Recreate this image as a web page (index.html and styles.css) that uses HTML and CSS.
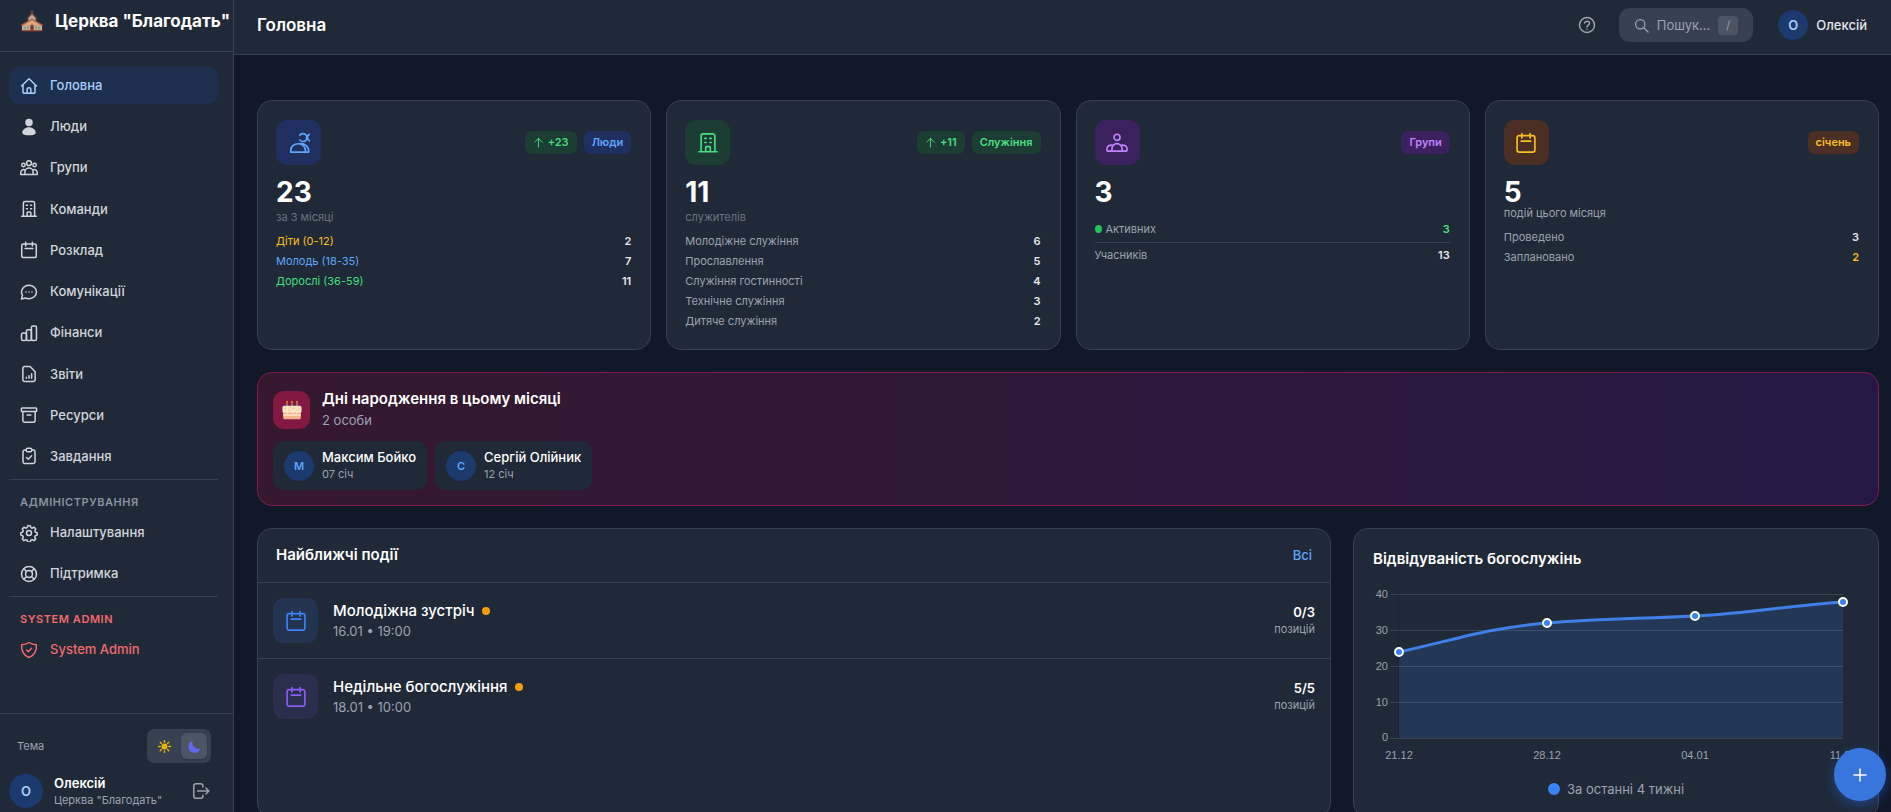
FILE: index.html
```html
<!DOCTYPE html>
<html lang="uk">
<head>
<meta charset="utf-8">
<meta name="viewport" content="width=device-width, initial-scale=1">
<title>Головна — Церква "Благодать"</title>
<link rel="stylesheet" href="styles.css">
</head>
<body>
<svg class="sprite" aria-hidden="true">
  <symbol id="i-home" viewBox="0 0 24 24"><path d="M2 12 12 2.3 22 12M4 10.500V20a1.700 1.700 0 0 0 1.700 1.700h12.600A1.700 1.700 0 0 0 20 20v-9.500M9.500 21.500v-4.700a2.500 2.500 0 0 1 5 0v4.700"/></symbol>
  <symbol id="i-person" viewBox="0 0 24 24"><g fill="currentColor" stroke="none"><circle cx="12" cy="6" r="5"/><path d="M12 12.200c5 0 9 3.600 9 7.300 0 2.300-4 3.500-9 3.500s-9-1.200-9-3.500c0-3.700 4-7.300 9-7.300z"/></g></symbol>
  <symbol id="i-groups" viewBox="0 0 24 24"><circle cx="12" cy="5.500" r="3.200"/><circle cx="4.600" cy="8" r="2.300"/><circle cx="19.400" cy="8" r="2.300"/><path d="M6.500 20.800v-3.300a5.500 5.500 0 0 1 11 0v3.300zM6.500 20.800H1v-2.600a4 4 0 0 1 5.700-3.700M17.500 20.800H23v-2.600a4 4 0 0 0-5.700-3.700"/></symbol>
  <symbol id="i-building" viewBox="0 0 24 24"><path d="M2.200 21.500h19.600M4.500 21.500V4.300A2.200 2.200 0 0 1 6.700 2.100h10.600a2.200 2.200 0 0 1 2.200 2.200v17.200M9.500 21.500V17a1 1 0 0 1 1-1h3a1 1 0 0 1 1 1v4.500M8.500 7h1.400M14.100 7h1.400M8.500 11.500h1.400M14.100 11.500h1.400"/></symbol>
  <symbol id="i-calendar" viewBox="0 0 24 24"><rect x="2.300" y="4" width="19.400" height="18" rx="2.400"/><path d="M7.500 1.600v5M16.500 1.600v5M6.800 10h10.400"/></symbol>
  <symbol id="i-chat" viewBox="0 0 24 24"><path d="M2 21.300 3.200 16.200C2.400 14.900 2 13.500 2 12c0-5 4.500-9 10-9s10 4 10 9-4.500 9-10 9c-1.800 0-3.500-.4-5-1.100zM7.900 12h.1M12 12h.1M16 12h.1"/></symbol>
  <symbol id="i-bars" viewBox="0 0 24 24"><rect x="2" y="12" width="6.600" height="10" rx="2"/><rect x="8.600" y="7.500" width="6.600" height="14.500" rx="2"/><rect x="15.200" y="2.500" width="6.800" height="19.500" rx="2"/></symbol>
  <symbol id="i-report" viewBox="0 0 24 24"><path d="M13.500 2H6.300A2.500 2.500 0 0 0 3.800 4.500v15A2.500 2.500 0 0 0 6.300 22h11.400a2.500 2.500 0 0 0 2.500-2.500V9zM8.500 17.800v-1.600M12 17.800v-3.600M15.500 17.800v-6"/></symbol>
  <symbol id="i-archive" viewBox="0 0 24 24"><rect x="1.800" y="2.800" width="20.400" height="4.400" rx="1"/><path d="M3.800 7.200v12A2.300 2.300 0 0 0 6.100 21.500h11.800a2.300 2.300 0 0 0 2.300-2.300v-12M9.500 12h5"/></symbol>
  <symbol id="i-task" viewBox="0 0 24 24"><path d="M8 4H6.300A2.300 2.300 0 0 0 4 6.300v13.400A2.300 2.300 0 0 0 6.300 22h11.400a2.300 2.300 0 0 0 2.300-2.300V6.300A2.300 2.300 0 0 0 17.700 4H16M8.700 14l2.400 2.400 4.400-4.600"/><rect x="8.200" y="1.800" width="7.600" height="4.600" rx="2.200"/></symbol>
  <symbol id="i-gear" viewBox="0 0 24 24"><circle cx="12" cy="12" r="3.300"/><path d="M10.300 2.200h3.400l.7 2.600 1.900.8 2.400-1.300 2.300 2.300-1.200 2.400.8 1.900 2.400.7v3.200l-2.500.7-.8 2 1.300 2.300-2.400 2.400-2.300-1.300-1.900.8-.7 2.400h-3.400l-.7-2.400-1.900-.8-2.400 1.300L3 19.800l1.300-2.300-.8-2-2.400-.7v-3.200l2.400-.8.8-1.900L3 6.600l2.300-2.300 2.400 1.300 1.900-.8z"/></symbol>
  <symbol id="i-support" viewBox="0 0 24 24"><circle cx="12" cy="12" r="10"/><circle cx="12" cy="12" r="4.600"/><path d="m5 5 3.700 3.700M19 5l-3.700 3.700M5 19l3.700-3.700M19 19l-3.700-3.700"/></symbol>
  <symbol id="i-shield" viewBox="0 0 24 24"><path d="M12 2c2.600 2 6 3 9.800 3 .6 8-2.300 14-9.800 17C4.500 19 1.600 13 2.200 5 6 5 9.400 4 12 2zM8.700 12l2.400 2.300 4.300-4.500"/></symbol>
  <symbol id="i-logout" viewBox="0 0 24 24"><path d="M14.500 6.500V5A2.600 2.600 0 0 0 11.900 2.400H5A2.600 2.600 0 0 0 2.400 5v14A2.600 2.600 0 0 0 5 21.600h6.900a2.600 2.600 0 0 0 2.600-2.600v-1.500M7.500 12H22.500M18.500 8l4 4-4 4"/></symbol>
  <symbol id="i-help" viewBox="0 0 24 24"><circle cx="12" cy="12" r="10"/><path d="M8.700 9.300c.6-1.600 1.800-2.300 3.300-2.300 1.900 0 3.400 1.100 3.400 2.800 0 2.300-3.300 2.500-3.300 4.700M12 17.600h.1"/></symbol>
  <symbol id="i-search" viewBox="0 0 24 24"><circle cx="10" cy="10" r="7.500"/><path d="m15.500 15.500 7 7"/></symbol>
  <symbol id="i-up" viewBox="0 0 24 24"><path d="M12 22V3M4 11l8-8 8 8"/></symbol>
  <symbol id="i-users-cut" viewBox="0 0 24 24" overflow="visible"><path d="M3 22v-1.500c0-4.500 3.500-7.700 8-7.700s8 3.200 8 7.700V22zM12 12.800c4.500-.8 10.500 1.700 10.500 7.700V22H19M12.900 3.600a4.300 4.300 0 1 1 0 5M20 6h1.400M24 2.300c-1.700.6-2.700 1.900-2.700 3.700s1 3.100 2.700 3.700"/></symbol>
  <symbol id="i-group" viewBox="0 0 24 24"><circle cx="12" cy="5.800" r="3.300"/><path d="M6.500 20.800v-2.600a5.500 5.500 0 0 1 11 0v2.600zM7.300 14.500C4 13.600 1 15.500 1 18.500v1.300a1 1 0 0 0 1 1h4.500M16.700 14.500c3.300-.9 6.300 1 6.300 4v1.300a1 1 0 0 1-1 1h-4.500"/></symbol>
</svg>

<div class="app">
  <aside class="sidebar">
    <div class="brand">
      <svg class="brand-logo" viewBox="0 0 24 24" aria-hidden="true">
        <path d="M12 .8v4M10.700 2.200h2.600" stroke="#8a5a44" stroke-width="1"/>
        <path d="M8 21V8.500L12 5l4 3.500V21z" fill="#e6b48b"/>
        <path d="M7 9.500 12 4l5 5.500" fill="none" stroke="#8f4f3f" stroke-width="1.500"/>
        <path d="M1 22.500V16l5-2 6-3 6 3 5 2v6.500z" fill="#dca57c"/>
        <path d="M.5 16.800 12 10l11.500 6.800" fill="none" stroke="#a85c48" stroke-width="1.600"/>
        <circle cx="12" cy="8.800" r="1.300" fill="#55b4d8"/>
        <path d="M10.300 22.500v-5a1.700 1.700 0 0 1 3.400 0v5z" fill="#6b3b30"/>
        <path d="M3.500 18.200h1.500v3H3.500zM6.700 17.200h1.500v3.500H6.700zM15.800 17.200h1.500v3.500h-1.500zM19 18.200h1.500v3H19z" fill="#4ba9cf"/>
        <path d="M.5 22.500h23" stroke="#8f4f3f" stroke-width="1.400"/>
      </svg>
      <span class="brand-name">Церква "Благодать"</span>
    </div>
    <nav class="nav">
      <div class="nav-list nav-main">
        <a class="nav-item active" href="#" aria-current="page"><svg class="icon"><use href="#i-home"/></svg>Головна</a>
        <a class="nav-item" href="#"><svg class="icon"><use href="#i-person"/></svg>Люди</a>
        <a class="nav-item" href="#"><svg class="icon"><use href="#i-groups"/></svg>Групи</a>
        <a class="nav-item" href="#"><svg class="icon"><use href="#i-building"/></svg>Команди</a>
        <a class="nav-item" href="#"><svg class="icon"><use href="#i-calendar"/></svg>Розклад</a>
        <a class="nav-item" href="#"><svg class="icon"><use href="#i-chat"/></svg>Комунікації</a>
        <a class="nav-item" href="#"><svg class="icon"><use href="#i-bars"/></svg>Фінанси</a>
        <a class="nav-item" href="#"><svg class="icon"><use href="#i-report"/></svg>Звіти</a>
        <a class="nav-item" href="#"><svg class="icon"><use href="#i-archive"/></svg>Ресурси</a>
        <a class="nav-item" href="#"><svg class="icon"><use href="#i-task"/></svg>Завдання</a>
      </div>
      <section class="nav-section">
        <h2 class="nav-label">АДМІНІСТРУВАННЯ</h2>
        <div class="nav-list">
          <a class="nav-item" href="#"><svg class="icon"><use href="#i-gear"/></svg>Налаштування</a>
          <a class="nav-item" href="#"><svg class="icon"><use href="#i-support"/></svg>Підтримка</a>
        </div>
      </section>
      <section class="nav-section danger">
        <h2 class="nav-label">SYSTEM ADMIN</h2>
        <div class="nav-list">
          <a class="nav-item" href="#"><svg class="icon"><use href="#i-shield"/></svg>System Admin</a>
        </div>
      </section>
    </nav>
    <div class="side-foot">
      <div class="theme-row">
        <span class="theme-label">Тема</span>
        <div class="theme-switch">
          <button class="theme-btn" type="button" aria-label="Світла тема">
            <svg viewBox="0 0 24 24" class="sun"><circle cx="12" cy="12" r="5.500" fill="currentColor"/><path d="M12 1v3M12 20v3M1 12h3M20 12h3M4.200 4.200l2.100 2.100M17.700 17.700l2.100 2.100M4.200 19.800l2.100-2.100M17.700 6.300l2.100-2.100" stroke="currentColor" stroke-width="2.600" stroke-linecap="round"/></svg>
          </button>
          <button class="theme-btn on" type="button" aria-label="Темна тема" aria-pressed="true">
            <svg viewBox="0 0 24 24" class="moon"><path d="M8.500 1.200A11.500 11.500 0 1 0 23 15.800 11.500 11.500 0 0 1 8.500 1.200z" fill="currentColor"/></svg>
          </button>
        </div>
      </div>
      <div class="account">
        <span class="avatar avatar-lg">О</span>
        <span class="account-text"><strong>Олексій</strong><small>Церква "Благодать"</small></span>
        <button class="logout" type="button" aria-label="Вийти"><svg class="icon"><use href="#i-logout"/></svg></button>
      </div>
    </div>
  </aside>

  <div class="page">
    <header class="topbar">
      <h1 class="page-title">Головна</h1>
      <button class="help" type="button" aria-label="Довідка"><svg class="icon"><use href="#i-help"/></svg></button>
      <button class="search" type="button"><svg class="icon"><use href="#i-search"/></svg>Пошук...<kbd>/</kbd></button>
      <button class="user" type="button"><span class="avatar">О</span>Олексій</button>
    </header>

    <main class="content">
      <section class="stats">
        <article class="card stat blue">
          <div class="stat-head">
            <span class="tile"><svg class="icon"><use href="#i-users-cut"/></svg></span>
            <span class="badge up"><svg class="icon"><use href="#i-up"/></svg>+23</span>
            <span class="badge">Люди</span>
          </div>
          <p class="stat-value">23</p>
          <p class="stat-note dim">за 3 місяці</p>
          <ul class="rows">
            <li><span class="c-amber">Діти (0-12)</span><b>2</b></li>
            <li><span class="c-blue">Молодь (18-35)</span><b>7</b></li>
            <li><span class="c-green">Дорослі (36-59)</span><b>11</b></li>
          </ul>
        </article>
        <article class="card stat green">
          <div class="stat-head">
            <span class="tile"><svg class="icon"><use href="#i-building"/></svg></span>
            <span class="badge up"><svg class="icon"><use href="#i-up"/></svg>+11</span>
            <span class="badge">Служіння</span>
          </div>
          <p class="stat-value">11</p>
          <p class="stat-note dim">служителів</p>
          <ul class="rows">
            <li><span>Молодіжне служіння</span><b>6</b></li>
            <li><span>Прославлення</span><b>5</b></li>
            <li><span>Служіння гостинності</span><b>4</b></li>
            <li><span>Технічне служіння</span><b>3</b></li>
            <li><span>Дитяче служіння</span><b>2</b></li>
          </ul>
        </article>
        <article class="card stat purple">
          <div class="stat-head">
            <span class="tile"><svg class="icon"><use href="#i-group"/></svg></span>
            <span class="badge">Групи</span>
          </div>
          <p class="stat-value">3</p>
          <ul class="rows ruled">
            <li><span class="with-dot"><i class="dot"></i>Активних</span><b class="c-green">3</b></li>
            <li><span>Учасників</span><b>13</b></li>
          </ul>
        </article>
        <article class="card stat amber">
          <div class="stat-head">
            <span class="tile"><svg class="icon"><use href="#i-calendar"/></svg></span>
            <span class="badge">січень</span>
          </div>
          <p class="stat-value">5</p>
          <p class="stat-note">подій цього місяця</p>
          <ul class="rows">
            <li><span>Проведено</span><b>3</b></li>
            <li><span>Заплановано</span><b class="c-amber">2</b></li>
          </ul>
        </article>
      </section>

      <section class="card birthdays">
        <div class="bd-head">
          <span class="bd-icon">
            <svg viewBox="0 0 24 24" aria-hidden="true">
              <path d="M6 9V4.500M12 9V4.500M18 9V4.500" stroke="#7fb7c9" stroke-width="1.300"/>
              <path d="M6 3.800V1.600M12 3.800V1.600M18 3.800V1.600" stroke="#f59a2c" stroke-width="1.600" stroke-linecap="round"/>
              <rect x="1.500" y="13" width="21" height="10" rx="1" fill="#f2b48a"/>
              <rect x="1.500" y="17" width="21" height="2" fill="#fde3c0"/>
              <path d="M.5 9a2 2 0 0 1 2-2h19a2 2 0 0 1 2 2v4.500a2 2 0 0 1-3.800 1 2 2 0 0 1-3.800 0 2 2 0 0 1-3.900 0 2 2 0 0 1-3.800 0 2 2 0 0 1-3.900 0A2 2 0 0 1 .5 13.500z" fill="#fbe6c4"/>
              <path d="M4 10h1M8 12h1M13 10h1M17 12h1M20 10h1M10 9h1" stroke="#e58f7c" stroke-width="1"/>
            </svg>
          </span>
          <div>
            <h2 class="title">Дні народження в цьому місяці</h2>
            <p class="sub">2 особи</p>
          </div>
        </div>
        <div class="chips">
          <a class="chip" href="#"><span class="avatar">М</span><span class="chip-text"><strong>Максим Бойко</strong><small>07 січ</small></span></a>
          <a class="chip" href="#"><span class="avatar">С</span><span class="chip-text"><strong>Сергій Олійник</strong><small>12 січ</small></span></a>
        </div>
      </section>

      <section class="bottom">
        <article class="card events">
          <header class="events-head"><h2 class="title">Найближчі події</h2><a href="#">Всі</a></header>
          <a class="event" href="#">
            <span class="tile t-blue"><svg class="icon"><use href="#i-calendar"/></svg></span>
            <span class="event-text"><span class="event-name">Молодіжна зустріч<i class="dot"></i></span><span class="sub">16.01 • 19:00</span></span>
            <span class="slots"><strong>0/3</strong><small>позицій</small></span>
          </a>
          <a class="event" href="#">
            <span class="tile t-violet"><svg class="icon"><use href="#i-calendar"/></svg></span>
            <span class="event-text"><span class="event-name">Недільне богослужіння<i class="dot"></i></span><span class="sub">18.01 • 10:00</span></span>
            <span class="slots"><strong>5/5</strong><small>позицій</small></span>
          </a>
        </article>
        <article class="card attendance">
          <h2 class="title">Відвідуваність богослужінь</h2>
          <svg class="chart" viewBox="0 0 486 186" role="img" aria-label="Відвідуваність за останні 4 тижні">
            <path class="area" d="M26 70C85 57 115 46 174 41S263 37 322 34 411 24 470 20V156H26z"/>
            <path class="grid" d="M18 12.500H470M18 48.500H470M18 84.500H470M18 120.500H470M18 156.500H470"/>
            <path class="axis" d="M25.500 12V156"/>
            <path class="line" d="M26 70C85 57 115 46 174 41S263 37 322 34 411 24 470 20"/>
            <g class="points"><circle cx="26" cy="70" r="4"/><circle cx="174" cy="41" r="4"/><circle cx="322" cy="34" r="4"/><circle cx="470" cy="20" r="4"/></g>
            <g class="ylabels"><text x="15" y="16">40</text><text x="15" y="52">30</text><text x="15" y="88">20</text><text x="15" y="124">10</text><text x="15" y="159">0</text></g>
            <g class="xlabels"><text x="26" y="177">21.12</text><text x="174" y="177">28.12</text><text x="322" y="177">04.01</text><text x="470" y="177">11.01</text></g>
          </svg>
          <p class="legend"><i class="dot"></i>За останні 4 тижні</p>
        </article>
      </section>
    </main>
  </div>
  <button class="fab" type="button" aria-label="Додати"><svg class="icon" viewBox="0 0 24 24"><path d="M12 4v16M4 12h16"/></svg></button>
</div>
</body>
</html>
```
FILE: styles.css
```css
:root {
  --bg: #111827;
  --surface: #1f2937;
  --line: #374151;
  --text: #ffffff;
  --soft: #d1d5db;
  --muted: #9ca3af;
  --dim: #6b7280;
  --blue: #60a5fa;
  --green: #4ade80;
  --amber: #fbbf24;
}

* { box-sizing: border-box; }

body {
  margin: 0;
  background: var(--bg);
  color: var(--text);
  font: 13px/20px Inter, "Noto Sans", sans-serif;
}

h1, h2, p, ul { margin: 0; padding: 0; }
ul { list-style: none; }
a { color: inherit; text-decoration: none; }
small, strong, b { display: block; }
small { font-size: 11px; font-weight: 400; color: var(--muted); }

button {
  border: 0;
  padding: 0;
  background: none;
  color: inherit;
  font: inherit;
  cursor: pointer;
}

.sprite { display: none; }

.icon {
  flex: none;
  width: 18px;
  height: 18px;
  fill: none;
  stroke: currentColor;
  stroke-width: 2;
  stroke-linecap: round;
  stroke-linejoin: round;
}

.app { display: flex; height: 100vh; overflow: hidden; }

/* Sidebar */
.sidebar {
  display: flex;
  flex: none;
  flex-direction: column;
  width: 234px;
  border-right: 1px solid var(--line);
  background: var(--surface);
}

.brand {
  display: flex;
  align-items: center;
  gap: 12px;
  padding: 9px 0 18px 21px;
  border-bottom: 1px solid var(--line);
}

.brand-logo { flex: none; width: 22px; height: 22px; fill: none; }
.brand-name { font-size: 17px; font-weight: 700; line-height: 24px; white-space: nowrap; }

.nav { flex: 1; min-height: 0; padding: 15px 15px 0 9px; overflow: hidden; }
.nav-list { display: flex; flex-direction: column; gap: 4px; }
.nav-main { justify-content: space-between; min-height: 408px; }

.nav-item {
  display: flex;
  align-items: center;
  gap: 12px;
  padding: 8px 11px;
  border-radius: 11px;
  color: var(--soft);
  font-weight: 500;
  line-height: 21px;
}

.nav-item.active { background: #1d3050; color: #a9cdfc; }

.nav-section {
  margin-top: 4px;
  padding-top: 14px;
  border-top: 1px solid var(--line);
}

.nav-label {
  margin-bottom: 4px;
  padding-left: 11px;
  color: #8a93a1;
  font-size: 11px;
  font-weight: 600;
  line-height: 16px;
  letter-spacing: 0.05em;
}

.danger .nav-label, .danger .nav-item { color: #f16a6d; }

.side-foot { padding: 15px 15px 4px 9px; border-top: 1px solid var(--line); }

.theme-row {
  display: flex;
  align-items: center;
  justify-content: space-between;
  padding: 0 7px 0 8px;
}

.theme-label { color: var(--muted); font-size: 11px; }
.theme-switch { display: flex; gap: 4px; padding: 4px; border-radius: 7px; background: var(--line); }
.theme-btn { display: grid; place-items: center; width: 26px; height: 26px; border-radius: 6px; }
.theme-btn.on { background: #4b5563; box-shadow: 0 1px 2px rgb(0 0 0 / 20%); }
.theme-btn svg { width: 13px; height: 13px; fill: none; }
.sun { color: #eab308; }
.moon { color: #6366f1; }

.account { display: flex; align-items: center; gap: 11px; padding-top: 11px; }
.account-text { flex: 1; }
.account-text strong { font-weight: 600; line-height: 17px; }
.account-text small { line-height: 16px; }
.logout { display: flex; padding-right: 8px; color: var(--muted); }

.avatar {
  display: grid;
  flex: none;
  place-items: center;
  width: 30px;
  height: 30px;
  border-radius: 50%;
  background: #1c3a6e;
  color: #a9cdfc;
  font-size: 13px;
  font-weight: 600;
}

.avatar-lg { width: 34px; height: 34px; }

/* Top bar */
.page { display: flex; flex: 1; flex-direction: column; min-width: 0; }

.topbar {
  display: flex;
  flex: none;
  align-items: center;
  padding: 8px 24px 12px 23px;
  border-bottom: 1px solid var(--line);
  background: var(--surface);
}

.page-title { flex: 1; font-size: 17px; font-weight: 600; line-height: 26px; }
.help { display: flex; margin-right: 23px; color: var(--muted); }

.search {
  display: flex;
  align-items: center;
  gap: 8px;
  margin-right: 25px;
  padding: 7px 15px;
  border-radius: 11px;
  background: var(--line);
  color: var(--muted);
}

.search .icon { width: 15px; height: 15px; }

.search kbd {
  padding: 2px 8px;
  border-radius: 4px;
  background: #4b5563;
  font: 11px/15px Inter, sans-serif;
}

.user { display: flex; align-items: center; gap: 8px; color: #e5e7eb; font-weight: 500; }

/* Content */
.content {
  display: flex;
  flex: 1;
  flex-direction: column;
  gap: 22px;
  min-height: 0;
  padding: 45px 12px 0 23px;
  overflow: hidden;
}

.content > * { flex: none; }
.card { border: 1px solid var(--line); border-radius: 15px; background: var(--surface); }
.title { font-size: 15px; font-weight: 600; line-height: 22px; }
.sub { color: var(--muted); }
.dot { flex: none; width: 8px; height: 8px; border-radius: 50%; background: #f59e0b; }

.c-amber { color: var(--amber) !important; }
.c-blue { color: var(--blue) !important; }
.c-green { color: var(--green) !important; }

.stats { display: grid; grid-template-columns: repeat(4, 1fr); gap: 15px; }
.stat { padding: 19px 19px 19px 18px; }

.blue { --tone: #60a5fa; --fill: #1f3060; }
.green { --tone: #4ade80; --fill: #1b3d33; }
.purple { --tone: #c084fc; --fill: #3c215f; }
.amber { --tone: #fbbf24; --fill: #4b2f25; }
.t-blue { --tone: #3b82f6; --fill: #233450; }
.t-violet { --tone: #8b5cf6; --fill: #2b2f4e; }

.tile {
  display: grid;
  flex: none;
  place-items: center;
  width: 45px;
  height: 45px;
  border-radius: 11px;
  background: var(--fill);
  color: var(--tone);
}

.tile .icon { width: 22px; height: 22px; stroke-width: 1.8; }

.stat-head { display: flex; align-items: center; gap: 7px; }
.stat-head .tile { margin-right: auto; }

.badge {
  display: flex;
  align-items: center;
  gap: 4px;
  padding: 4px 8px;
  border-radius: 7px;
  background: var(--fill);
  color: var(--tone);
  font-size: 11px;
  font-weight: 600;
  line-height: 15px;
}

.badge.up { --tone: #4ade80; --fill: #1b3d33; }
.badge .icon { width: 11px; height: 11px; }

.stat-value { margin-top: 13px; font-size: 28px; font-weight: 700; line-height: 28px; }
.stat-note { color: var(--muted); font-size: 11px; line-height: 15px; }
.stat-note.dim { margin-top: 4px; color: var(--dim); }

.rows { display: flex; flex-direction: column; gap: 2px; margin-top: 7px; }

.rows li {
  display: flex;
  justify-content: space-between;
  color: var(--muted);
  font-size: 11px;
  line-height: 18px;
}

.rows b { color: #e5e7eb; font-weight: 600; }
.rows.ruled { gap: 3px; margin-top: 14px; }
.rows.ruled li:first-child { padding-bottom: 4px; border-bottom: 1px solid var(--line); }
.with-dot { display: flex; align-items: center; gap: 4px; }
.with-dot .dot { width: 7px; background: #22c55e; }

/* Birthdays */
.birthdays {
  padding: 15px;
  border-color: #831b50;
  background: linear-gradient(90deg, #35182e, #251844);
}

.bd-head { display: flex; align-items: center; gap: 12px; margin-bottom: 10px; }

.bd-icon {
  display: grid;
  place-items: center;
  width: 37px;
  height: 38px;
  border-radius: 11px;
  background: #831843;
}

.bd-icon svg { width: 20px; height: 20px; fill: none; }
.bd-head .sub { line-height: 21px; }
.chips { display: flex; gap: 8px; }

.chip {
  display: flex;
  align-items: center;
  gap: 8px;
  padding: 8px 11px;
  border-radius: 11px;
  background: var(--surface);
}

.chip .avatar { color: var(--blue); font-size: 11px; }
.chip strong { font-weight: 500; line-height: 17px; }
.chip small { line-height: 16px; }

/* Events and attendance */
.bottom { display: grid; grid-template-columns: repeat(3, 1fr); gap: 22px; }
.events { grid-column: span 2; }

.events-head {
  display: flex;
  align-items: center;
  justify-content: space-between;
  padding: 15px 18px 16px;
  border-bottom: 1px solid var(--line);
}

.events-head a { color: var(--blue); font-weight: 500; }
.event { display: flex; align-items: center; gap: 15px; padding: 15px; }
.event + .event { border-top: 1px solid var(--line); }
.event-text { display: flex; flex: 1; flex-direction: column; }

.event-name {
  display: flex;
  align-items: center;
  gap: 8px;
  font-size: 15px;
  font-weight: 500;
  line-height: 20px;
}

.slots { text-align: right; }
.slots strong { font-weight: 600; line-height: 17px; }
.slots small { line-height: 16px; }

.attendance { padding: 19px 19px 18px; }
.chart { display: block; width: 100%; margin: 12px 0 11px; overflow: visible; }
.chart path { fill: none; }
.chart .area { fill: #3b82f6; fill-opacity: 0.17; }
.chart .grid { stroke: #94a3b8; stroke-opacity: 0.22; }
.chart .axis { stroke: #111827; stroke-opacity: 0.35; }
.chart .line { stroke: #3f7fe6; stroke-width: 3; }
.points { fill: #3b82f6; stroke: #fff; stroke-width: 2; }
.chart text { fill: var(--muted); font: 11px "Liberation Sans", Arial, sans-serif; }
.ylabels { text-anchor: end; }
.xlabels { text-anchor: middle; }

.legend {
  display: flex;
  align-items: center;
  justify-content: center;
  gap: 7px;
  color: var(--muted);
}

.legend .dot { width: 12px; height: 12px; background: #3b82f6; }

.fab {
  position: fixed;
  right: 5px;
  bottom: 11px;
  display: grid;
  place-items: center;
  width: 52px;
  height: 53px;
  border-radius: 50%;
  background: #3876de;
  box-shadow: 0 4px 12px rgb(37 99 235 / 45%);
  color: #fff;
}
```
